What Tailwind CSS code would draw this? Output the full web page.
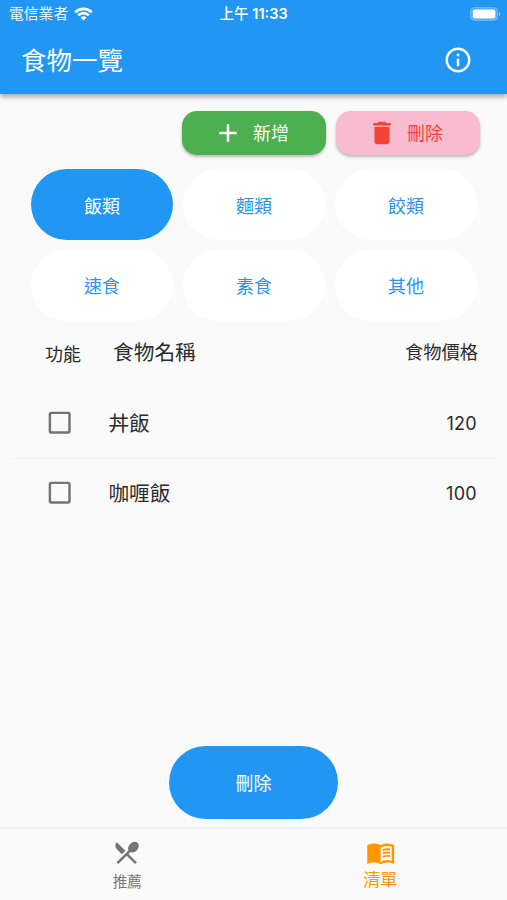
<!DOCTYPE html>
<html lang="zh-Hant">
<head>
<meta charset="utf-8">
<title>食物一覽</title>
<script src="https://cdn.jsdelivr.net/npm/@tailwindcss/browser@4"></script>
</head>
<body class="bg-[#fafafa] font-['Inter','Noto_Sans_CJK_TC',sans-serif]">
<div class="flex h-[900px] w-[507px] flex-col overflow-hidden bg-[#fafafa] text-[#2b2b2b]">
  <header class="relative h-[94px] shrink-0 bg-[#2196f3] text-white shadow-[0_3px_5px_rgba(0,0,0,0.32)]">
    <div class="grid h-[27px] grid-cols-3 items-center text-[14.5px] leading-[20px]">
      <div class="flex items-center gap-[6px] pl-[9px]">
        <span class="text-[14.8px] text-white/90">電信業者</span>
        <svg class="h-[14px] w-[19px]" viewBox="0 0 19 14" fill="none" stroke="#fff" stroke-width="2.7"><path d="M1.2 5.2a11.8 11.8 0 0 1 16.6 0"/><path d="M4.2 8.4a7.5 7.5 0 0 1 10.6 0"/><path d="M9.5 13.600 6.6 10.7a4.2 4.2 0 0 1 5.8 0z" fill="#fff" stroke="none"/></svg>
      </div>
      <div class="whitespace-nowrap text-center font-medium">上午 <span class="font-semibold">11:33</span></div>
      <div class="flex justify-end pr-[6px]">
        <svg class="h-[14px] w-[31px]" viewBox="0 0 31 14"><rect x=".6" y=".6" width="27" height="12.8" rx="4" fill="#fff" fill-opacity=".2" stroke="#fff" stroke-opacity=".3"/><rect x="2.8" y="2.6" width="22.6" height="8.8" rx="2" fill="#fff"/><path d="M29 4.800c2 .8 2 3.600 0 4.400z" fill="#fff" fill-opacity=".45"/></svg>
      </div>
    </div>
    <div class="flex h-[66px] items-center justify-between pl-[21px] pr-[34px]">
      <h1 class="pt-[2px] text-[25.5px] leading-[30px]">食物一覽</h1>
      <svg class="size-[30px]" viewBox="0 0 24 24" fill="currentColor"><path d="M11 7h2v2h-2zm0 4h2v6h-2zm1-9C6.48 2 2 6.48 2 12s4.48 10 10 10 10-4.48 10-10S17.52 2 12 2zm0 18c-4.41 0-8-3.59-8-8s3.59-8 8-8 8 3.59 8 8-3.59 8-8 8z"/></svg>
    </div>
  </header>

  <main class="flex min-h-0 flex-1 flex-col">
    <div class="mt-[17px] flex justify-end gap-[10px] pr-[27px] text-[18px]">
      <button class="flex h-[44px] w-[144px] items-center justify-center gap-[10px] rounded-[15px] bg-[#4caf50] pr-[6px] text-white shadow-[0_2px_3px_rgba(0,0,0,0.26)]">
        <svg class="size-[30px]" viewBox="0 0 24 24" fill="currentColor"><path d="M19 13h-6v6h-2v-6H5v-2h6V5h2v6h6v2z"/></svg><span class="pt-[1px]">新增</span>
      </button>
      <button class="flex h-[44px] w-[144px] items-center justify-center gap-[10px] rounded-[15px] bg-[#f8bbd0] pr-[6px] text-[#f44336] shadow-[0_2px_3px_rgba(0,0,0,0.26)]">
        <svg class="size-[30px]" viewBox="0 0 24 24" fill="currentColor"><path d="M6 19c0 1.1.9 2 2 2h8c1.1 0 2-.9 2-2V7H6v12zM19 4h-3.5l-1-1h-5l-1 1H5v2h14V4z"/></svg><span class="pt-[1px]">刪除</span>
      </button>
    </div>

    <div class="mt-[14px] grid grid-cols-[repeat(3,142px)] gap-x-[10px] gap-y-[10px] pl-[31px] text-[18px] text-[#2b93e6]">
      <button class="h-[71px] rounded-full bg-[#2196f3] pt-[3px] text-white">飯類</button>
      <button class="h-[71px] rounded-full bg-white pt-[3px]">麵類</button>
      <button class="h-[71px] rounded-full bg-white pt-[3px]">餃類</button>
      <button class="h-[71px] rounded-full bg-white pt-[2px]">速食</button>
      <button class="h-[71px] rounded-full bg-white pt-[2px]">素食</button>
      <button class="h-[71px] rounded-full bg-white pt-[2px]">其他</button>
    </div>

    <div class="mt-[12px] flex h-[40px] items-center pl-[45px] pr-[29px] text-[18px]">
      <span class="w-[68px] pt-[3px]">功能</span>
      <span class="flex-1 text-[20.7px]">食物名稱</span>
      <span class="text-[18.3px]">食物價格</span>
    </div>

    <div class="mx-[11px] mt-[15px] flex h-[71px] items-center border-b border-[#f0f0f0] pl-[34px] pr-[19px]">
      <svg class="size-[29.4px] text-[#737373]" viewBox="0 0 24 24" fill="currentColor"><path d="M19 5v14H5V5h14m0-2H5c-1.1 0-2 .9-2 2v14c0 1.1.9 2 2 2h14c1.1 0 2-.9 2-2V5c0-1.1-.9-2-2-2z"/></svg>
      <span class="flex-1 pl-[34px] pt-[2px] text-[20.7px]">丼飯</span>
      <span class="text-[18px] tracking-[0.3px]">120</span>
    </div>
    <div class="mx-[11px] flex h-[68px] items-center pl-[34px] pr-[19px]">
      <svg class="size-[29.4px] text-[#737373]" viewBox="0 0 24 24" fill="currentColor"><path d="M19 5v14H5V5h14m0-2H5c-1.1 0-2 .9-2 2v14c0 1.1.9 2 2 2h14c1.1 0 2-.9 2-2V5c0-1.1-.9-2-2-2z"/></svg>
      <span class="flex-1 pl-[34px] pt-[2px] text-[20.7px]">咖喱飯</span>
      <span class="text-[18px] tracking-[0.3px]">100</span>
    </div>

    <button class="mb-[8px] mt-auto ml-[169px] h-[73px] w-[169px] rounded-full bg-[#2196f3] pt-[2px] text-[18px] text-white">刪除</button>
  </main>

  <nav class="grid h-[73px] shrink-0 grid-cols-2 border-t-2 border-[#f3f3f3]">
    <div class="flex flex-col items-center pt-[9px] text-[#757575]">
      <svg class="size-[29.4px]" viewBox="0 0 24 24" fill="currentColor"><path d="M8.1 13.34l2.83-2.83L3.91 3.5c-1.56 1.56-1.56 4.09 0 5.66l4.19 4.18zm6.78-1.81c1.53.71 3.68.21 5.27-1.38 1.91-1.91 2.28-4.65.81-6.12-1.46-1.46-4.2-1.1-6.12.81-1.59 1.59-2.09 3.74-1.38 5.27L3.7 19.87l1.41 1.41L12 14.41l6.88 6.88 1.41-1.41L13.41 13l1.47-1.47z"/></svg>
      <span class="mt-[5px] pl-[1px] text-[14.5px] leading-[20px]">推薦</span>
    </div>
    <div class="flex flex-col items-center pt-[9px] text-[#ff9800]">
      <svg class="size-[29.4px]" viewBox="0 0 24 24" fill="currentColor"><path d="M21 5c-1.11-.35-2.33-.5-3.5-.5-1.95 0-4.05.4-5.5 1.5-1.45-1.1-3.55-1.5-5.5-1.5S2.45 4.9 1 6v14.65c0 .25.25.5.5.5.1 0 .15-.05.25-.05C3.1 20.45 5.05 20 6.5 20c1.95 0 4.05.4 5.5 1.5 1.35-.85 3.8-1.5 5.5-1.5 1.65 0 3.35.3 4.75 1.05.1.05.15.05.25.05.25 0 .5-.25.5-.5V6c-.6-.45-1.25-.75-2-1zm0 13.5c-1.1-.35-2.3-.5-3.5-.5-1.7 0-4.15.65-5.5 1.5V8c1.35-.85 3.8-1.5 5.5-1.5 1.2 0 2.4.15 3.5.5v11.5z"/><path d="M13.7 9.9c1.7-.7 4-.9 6-.5M13.7 12.6c1.7-.7 4-.9 6-.5M13.7 15.3c1.7-.7 4-.9 6-.5" fill="none" stroke="currentColor" stroke-width="1.5"/></svg>
      <span class="mt-[3px] text-[17px] leading-[20px]">清單</span>
    </div>
  </nav>
</div>
</body>
</html>
